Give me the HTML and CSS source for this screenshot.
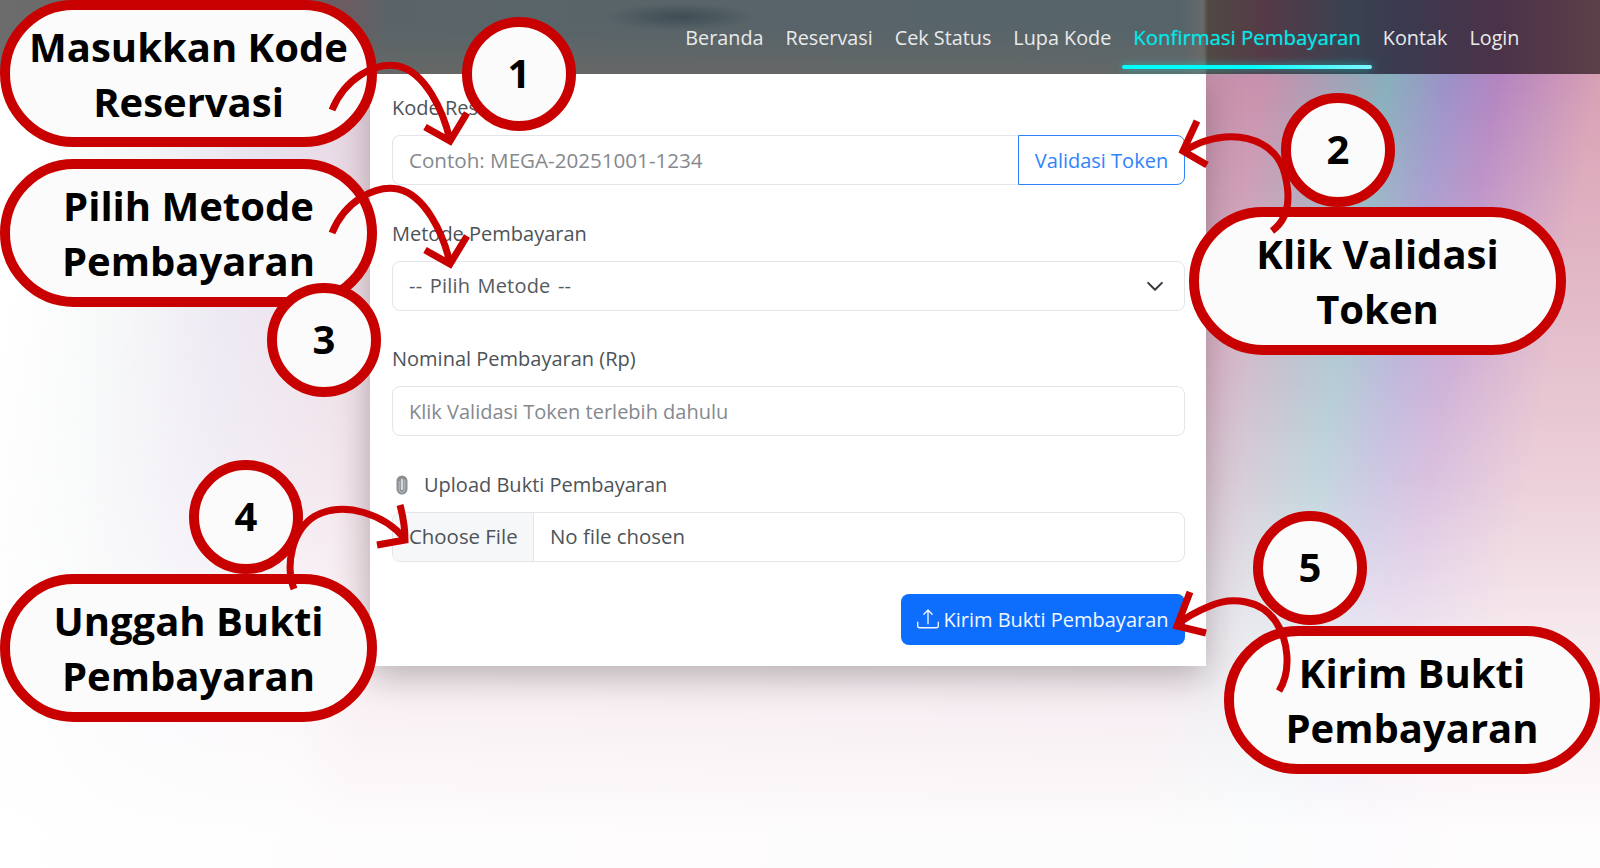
FILE: index.html
```html
<!DOCTYPE html>
<html lang="id">
<head>
    <meta charset="UTF-8">
    <meta name="viewport" content="width=device-width, initial-scale=1.0">
    <title>Konfirmasi Pembayaran</title>
    <link rel="stylesheet" href="styles.css">
</head>
<body>
    <nav class="navbar">
        <a class="nav-link" href="#">Beranda</a>
        <a class="nav-link" href="#">Reservasi</a>
        <a class="nav-link" href="#">Cek Status</a>
        <a class="nav-link" href="#">Lupa Kode</a>
        <a class="nav-link active" href="#">Konfirmasi Pembayaran</a>
        <a class="nav-link" href="#">Kontak</a>
        <a class="nav-link" href="#">Login</a>
    </nav>

    <main class="contenido">
        <form class="card">
            <div class="grupo">
                <label class="etiqueta">Kode Reservasi</label>
                <div class="input-group">
                    <input class="campo campo-kode" type="text" placeholder="Contoh: MEGA-20251001-1234">
                    <button class="btn-validasi" type="button">Validasi Token</button>
                </div>
            </div>
            <div class="grupo">
                <label class="etiqueta">Metode Pembayaran</label>
                <div class="campo pilih">
                    <span class="pilih-txt">-- Pilih Metode --</span>
                    <svg class="chevron" viewBox="0 0 16 16" width="20" height="20"><path d="M2.5 5.5L8 11l5.5-5.5" fill="none" stroke="#343a40" stroke-width="1.6" stroke-linecap="round" stroke-linejoin="round"/></svg>
                </div>
            </div>
            <div class="grupo">
                <label class="etiqueta">Nominal Pembayaran (Rp)</label>
                <input class="campo" type="text" placeholder="Klik Validasi Token terlebih dahulu">
            </div>
            <div class="grupo grupo-ultimo">
                <label class="etiqueta etiqueta-icono">
                    <svg class="clip" viewBox="0 0 12 20" width="12" height="20"><rect x="0.5" y="0.5" width="11" height="19" rx="5.5" fill="#8b8f93"/><path d="M6 5v9" stroke="#d5d7d9" stroke-width="2.4" stroke-linecap="round"/><path d="M3.2 6v8.6a2.8 2.8 0 0 0 5.6 0V4.6" fill="none" stroke="#c4c6c9" stroke-width="0.9"/></svg>
                    Upload Bukti Pembayaran
                </label>
                <div class="campo archivo">
                    <span class="archivo-btn">Choose File</span>
                    <span class="archivo-txt">No file chosen</span>
                </div>
            </div>
            <div class="acciones">
                <button class="btn-kirim" type="button">
                    <svg viewBox="0 0 16 16" width="22" height="22" fill="currentColor"><path d="M.5 9.9a.5.5 0 0 1 .5.5v2.5a1 1 0 0 0 1 1h12a1 1 0 0 0 1-1v-2.5a.5.5 0 0 1 1 0v2.5a2 2 0 0 1-2 2H2a2 2 0 0 1-2-2v-2.5a.5.5 0 0 1 .5-.5z"/><path d="M7.646 1.146a.5.5 0 0 1 .708 0l3 3a.5.5 0 0 1-.708.708L8.5 2.707V11.5a.5.5 0 0 1-1 0V2.707L5.354 4.854a.5.5 0 1 1-.708-.708l3-3z"/></svg>
                    Kirim Bukti Pembayaran
                </button>
            </div>
        </form>
    </main>

    <!-- anotaciones encima de la pagina -->
    <div class="globo globo-kode">Masukkan Kode<br>Reservasi</div>
    <div class="globo globo-metode">Pilih Metode<br>Pembayaran</div>
    <div class="globo globo-klik">Klik Validasi<br>Token</div>
    <div class="globo globo-unggah">Unggah Bukti<br>Pembayaran</div>
    <div class="globo globo-kirim">Kirim Bukti<br>Pembayaran</div>

    <div class="numero num-1">1</div>
    <div class="numero num-2">2</div>
    <div class="numero num-3">3</div>
    <div class="numero num-4">4</div>
    <div class="numero num-5">5</div>

    <svg class="flechas" viewBox="0 0 1600 868" width="1600" height="868">
        <path d="M332 110C345 78 375 62 398 66C425 72 443 110 450 140M425 127L450 141L467 113"/>
        <path d="M332 233C345 201 375 185 398 189C425 195 443 233 450 263M425 250L450 264L467 236"/>
        <path d="M1272 231C1290 218 1290 195 1285 175C1278 145 1250 135 1225 137C1205 139 1195 145 1184 151M1197 121L1183 151L1207 165"/>
        <path d="M294 589C285 565 292 530 315 516C345 500 385 515 405 539M400 505C404 520 405 530 405 540L377 545"/>
        <path d="M1279 691C1292 670 1288 640 1276 622C1262 600 1232 596 1210 606C1195 612 1185 618 1177 625M1190 592L1177 626L1206 633"/>
    </svg>
</body>
</html>
```

FILE: styles.css
```css
/* Estilos generales */
html, body {
    height: 100%;
}
body {
    margin: 0;
    width: 1600px;
    height: 868px;
    overflow: hidden;
    position: relative;
    font-family: "Open Sans", "Noto Sans", sans-serif;
    font-size: 20px;
    background-color: #fff;
    background-image:
        linear-gradient(180deg, rgba(255,255,255,0) 74px, rgba(255,255,255,0.28) 300px, rgba(255,255,255,0.5) 480px, rgba(255,255,255,0.78) 640px, rgba(255,255,255,0.97) 830px),
        linear-gradient(100deg, #fff 60px, #f3f5f6 170px, #e6e0ee 280px, #e8d0dc 420px, #d8a4b8 480px, #c890ac 1260px, #88aebc 1381px, #9c90c8 1440px, #b484c0 1490px, #d8a0b4 1588px);
}

/* Barra superior */
.navbar {
    height: 74px;
    padding-right: 69.5px;
    box-sizing: border-box;
    display: flex;
    justify-content: flex-end;
    position: relative;
    z-index: 2;
    background-color: #56646a;
    background-image:
        radial-gradient(ellipse 75px 14px at 680px 17px, rgba(55,72,80,0.8), rgba(55,72,80,0)),
        linear-gradient(180deg, rgba(112,106,100,0) 30px, rgba(112,106,100,0.55) 74px),
        linear-gradient(90deg, #6c6c6c 0, #6b5c62 350px, #5a6468 385px, #56646a 1180px, #666a6a 1203px, #504843 1208px, #553a48 1267px, #3a4250 1350px, #3a3a50 1400px, #4c3248 1500px, #5a4048 1600px);
    background-size: 100% 100%, 836px 74px, 100% 100%;
    background-position: 0 0, 370px 0, 0 0;
    background-repeat: no-repeat;
}
.nav-link {
    position: relative;
    padding: 23px 11px 0;
    color: #e9eaea;
    font-size: 19.8px;
    text-decoration: none;
    line-height: 30px;
    white-space: nowrap;
}
.nav-link.active {
    padding-top: 22px;
    color: #06e8e8;
    font-size: 20.35px;
    text-shadow: 0 0 1px rgba(0,230,230,0.6);
}
.nav-link.active::after {
    content: "";
    position: absolute;
    left: 0;
    right: 0;
    top: 65px;
    height: 4px;
    border-radius: 2px;
    background: linear-gradient(90deg, #00ffff, #00ffff 50%, #7ff6ff);
    box-shadow: 0 0 8px rgba(0,255,255,0.55);
}

/* Tarjeta del formulario */
.contenido {
    width: 1576px;
    display: flex;
    justify-content: center;
}
.card {
    width: 836px;
    box-sizing: border-box;
    padding: 19px 21px 21px 22px;
    background: #fff;
    box-shadow: 0 10px 34px rgba(0,0,0,0.26);
}
.grupo {
    margin-bottom: 33.5px;
}
.grupo-ultimo {
    margin-bottom: 32px;
}
.etiqueta {
    display: block;
    height: 30px;
    margin-bottom: 12px;
    line-height: 30px;
    color: #4d5358;
}
.etiqueta-icono {
    display: flex;
    align-items: center;
    gap: 16px;
    padding-left: 4px;
}
.campo {
    display: block;
    width: 100%;
    height: 50px;
    box-sizing: border-box;
    padding: 0 16px;
    border: 1.5px solid #e2e5e9;
    border-radius: 8px;
    background: #fff;
    font: inherit;
    color: #555b60;
    outline: none;
}
.campo::placeholder {
    color: #85898e;
    opacity: 1;
}
.campo-kode {
    font-size: 20.6px;
}
.input-group {
    display: flex;
}
.input-group .campo {
    flex: 1;
    min-width: 0;
    border-right: 0;
    border-radius: 8px 0 0 8px;
}
.btn-validasi {
    width: 167px;
    height: 50px;
    padding: 0;
    border: 1.5px solid #2f83fd;
    border-radius: 0 8px 8px 0;
    background: #fff;
    color: #2f83fd;
    font: inherit;
}
.pilih {
    display: flex;
    align-items: center;
    justify-content: space-between;
}
.pilih-txt {
    letter-spacing: 0.2px;
    word-spacing: 2px;
}
.chevron {
    margin-right: 3px;
}
.archivo {
    display: flex;
    align-items: center;
    padding: 0;
    color: #4d5358;
    font-size: 20.4px;
}
.archivo-btn {
    width: 141px;
    height: 100%;
    box-sizing: border-box;
    padding-left: 16px;
    line-height: 47px;
    background: #f6f7f9;
    border-right: 1.5px solid #e2e5e9;
    border-radius: 6px 0 0 6px;
    white-space: nowrap;
}
.archivo-txt {
    padding: 0 0 2px 16px;
}
.acciones {
    display: flex;
    justify-content: flex-end;
}
.btn-kirim {
    display: flex;
    align-items: center;
    justify-content: center;
    gap: 4px;
    width: 284px;
    height: 51px;
    padding: 0;
    border: 0;
    border-radius: 8px;
    background: #0d6efd;
    color: #f2f7ff;
    font: inherit;
}

/* Globos rojos de las instrucciones */
.globo, .numero {
    position: absolute;
    z-index: 3;
    box-sizing: border-box;
    display: flex;
    align-items: center;
    justify-content: center;
    border: 10px solid #c80000;
    background: #fbfbfb;
    color: #000;
    font-weight: 700;
    font-size: 40px;
    text-align: center;
}
.globo {
    line-height: 55px;
    border-radius: 74px;
}
.numero {
    width: 114px;
    height: 114px;
    border-radius: 50%;
    padding-bottom: 3px;
}
.globo-kode   { left: 0; top: 0; width: 377px; height: 147px; }
.globo-metode { left: 0; top: 159px; width: 377px; height: 148px; }
.globo-klik   { left: 1189px; top: 207px; width: 377px; height: 148px; }
.globo-unggah { left: 0; top: 574px; width: 377px; height: 148px; }
.globo-kirim  { left: 1224px; top: 626px; width: 376px; height: 148px; }
.num-1 { left: 462px; top: 17px; }
.num-2 { left: 1281px; top: 93px; }
.num-3 { left: 267px; top: 283px; }
.num-4 { left: 189px; top: 460px; }
.num-5 { left: 1253px; top: 511px; }

.flechas {
    position: absolute;
    left: 0;
    top: 0;
    z-index: 4;
    pointer-events: none;
}
.flechas path {
    fill: none;
    stroke: #c80000;
    stroke-width: 7;
    stroke-linecap: butt;
    stroke-linejoin: miter;
}
```
